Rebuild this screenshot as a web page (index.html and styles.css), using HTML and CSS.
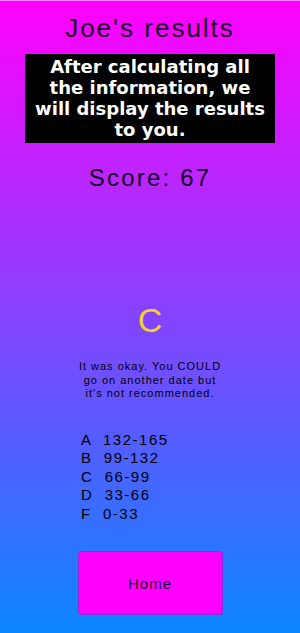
FILE: index.html
```html
<!DOCTYPE html>
<html>
<head>
    <title>Joe's results</title>
    <link rel="stylesheet" href="styles.css">
</head>
<body>
    <div class="results-screen">
        <h1 class="title">Joe's results</h1>
        <div class="notice">After calculating all<br>the information, we<br>will display the results<br>to you.</div>
        <div class="score">Score: 67</div>
        <div class="grade">C</div>
        <p class="verdict">It was okay. You COULD go on another date but it's not recommended.</p>
        <div class="grade-list">
            <div class="grade-row">A  132-165</div>
            <div class="grade-row">B  99-132</div>
            <div class="grade-row">C  66-99</div>
            <div class="grade-row">D  33-66</div>
            <div class="grade-row">F  0-33</div>
        </div>
        <button class="home-btn">Home</button>
    </div>
</body>
</html>
```

FILE: styles.css
```css
body {
    margin: 0;
    font-family: "Liberation Sans", Arial, sans-serif;
    color: #000;
}
.results-screen {
    height: 633px;
    box-sizing: border-box;
    border-top: 1px solid #ff7aff;
    background: linear-gradient(to bottom, #ff00ff, #0a86ff);
    display: flex;
    flex-direction: column;
    align-items: center;
}
.title {
    margin: 12px 0 0;
    font-size: 26px;
    line-height: 30px;
    font-weight: normal;
    letter-spacing: 2px;
    color: #1a001f;
}
.notice {
    margin-top: 11px;
    width: 250px;
    box-sizing: border-box;
    padding: 2px 4px 3px;
    background-color: #000;
    color: #fff;
    font-family: "DejaVu Sans", Verdana, sans-serif;
    font-weight: bold;
    font-size: 18px;
    line-height: 21px;
    text-align: center;
}
.score {
    margin-top: 21px;
    font-size: 24px;
    line-height: 28px;
    letter-spacing: 2.2px;
    color: #1a001f;
}
.grade {
    margin-top: 109px;
    font-size: 34px;
    line-height: 38px;
    color: #f0d428;
}
.verdict {
    margin: 21px 0 0;
    width: 146px;
    font-size: 11px;
    line-height: 13.5px;
    letter-spacing: 1px;
    text-align: center;
}
.grade-list {
    align-self: flex-start;
    margin: 30px 0 0 81px;
    font-size: 15px;
    line-height: 18.5px;
    letter-spacing: 1.5px;
}
.grade-row {
    white-space: pre;
}
button.home-btn {
    margin-top: 28px;
    width: 145px;
    height: 64px;
    background-color: #ff00ff;
    border: 1px solid #8a2bd6;
    border-radius: 3px;
    font-family: "Liberation Sans", Arial, sans-serif;
    font-size: 15px;
    letter-spacing: 1px;
    color: #1a0030;
    cursor: pointer;
}
```
